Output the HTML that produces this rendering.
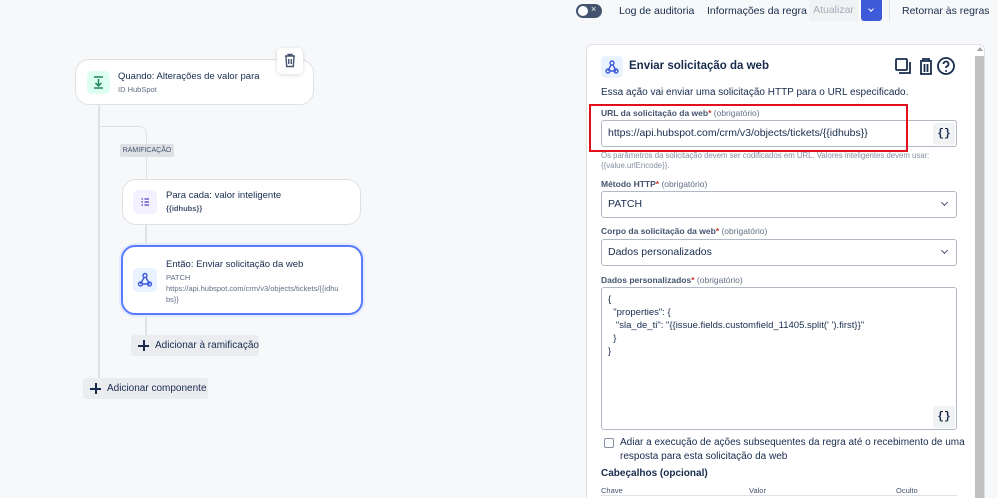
<!DOCTYPE html>
<html><head><meta charset="utf-8"><style>
*{box-sizing:border-box;margin:0;padding:0}
html,body{width:998px;height:498px;overflow:hidden}
body{background:#f7f8f9;font-family:"Liberation Sans",sans-serif;color:#172b4d;position:relative}
.a{position:absolute}
.t{font-size:11px;white-space:nowrap}
.card{position:absolute;background:#fff;border:1px solid #dfe1e6;border-radius:14px}
.lbl{position:absolute;left:601px;font-size:8.5px;font-weight:bold;color:#44546f;white-space:nowrap}
.lbl span{font-weight:normal;color:#626f86}
.lbl i{color:#c9372c;font-style:normal}
.inp{position:absolute;left:601px;width:356px;border:1px solid #b3b9c4;border-radius:3px;background:#fff;font-size:10.5px;padding-left:6px;white-space:nowrap}
.br{position:absolute;width:22px;height:22px;background:#f1f2f4;border-radius:3px;font-size:11px;font-weight:bold;text-align:center;line-height:22px;font-family:"Liberation Mono",monospace}
.chev{position:absolute;right:9px;top:8px;width:5px;height:5px;border-right:1.5px solid #44546f;border-bottom:1.5px solid #44546f;transform:rotate(45deg)}
.btn{position:absolute;background:#ebecf0;border-radius:3px;font-size:10px;color:#172b4d;padding-left:24px;line-height:21px;height:21px;white-space:nowrap}
.btn:before{content:"";position:absolute;left:7px;top:10px;width:11px;height:1.5px;background:#172b4d}
.btn:after{content:"";position:absolute;left:12px;top:5px;width:1.5px;height:11px;background:#172b4d}
</style></head><body>
<div class="a" style="left:576px;top:4px;width:26px;height:14px;background:#44546f;border-radius:7px"><div class="a" style="left:2px;top:2px;width:10px;height:10px;background:#fff;border-radius:50%"></div><div class="a t" style="left:15px;top:0;color:#fff;font-size:9px">×</div></div>
<div class="a t" style="left:619px;top:5px;font-size:10.5px">Log de auditoria</div>
<div class="a t" style="left:707px;top:5px;font-size:10.5px">Informações da regra</div>
<div class="a t" style="left:809px;top:0;width:49px;height:21px;background:#f1f2f4;color:#a5adba;line-height:21px;text-align:center;font-size:10.5px">Atualizar</div>
<div class="a" style="left:861px;top:0;width:21px;height:21px;background:#3d5ad9;border-radius:0 0 3px 3px"><div class="a" style="left:8px;top:7px;width:4px;height:4px;border-right:1.5px solid #fff;border-bottom:1.5px solid #fff;transform:rotate(45deg)"></div></div>
<div class="a" style="left:889px;top:0;width:1px;height:21px;background:#dfe1e6"></div>
<div class="a t" style="left:902px;top:5px;font-size:10.5px">Retornar às regras</div>

<div class="a" style="left:98px;top:104px;width:2px;height:275px;background:#dfe1e6"></div>
<div class="a" style="left:99px;top:126px;width:48px;height:56px;border-top:1.5px solid #dfe1e6;border-right:1.5px solid #dfe1e6;border-radius:0 8px 0 0"></div>
<div class="a" style="left:145px;top:222px;width:1.5px;height:115px;background:#dfe1e6"></div>
<div class="a" style="left:120px;top:144px;width:54px;height:13px;background:#dfe1e6;border-radius:2px;font-size:7px;color:#44546f;line-height:13px;text-align:center;white-space:nowrap">RAMIFICAÇÃO</div>

<div class="card" style="left:75px;top:59px;width:239px;height:46px">
<div class="a" style="left:11px;top:11px;width:23px;height:23px;background:#dcfff1;border-radius:5px"><svg width="23" height="23"><path d="M7 6h9M11.5 8v7M8.5 12l3 3 3-3M7 17h9" stroke="#1f845a" stroke-width="1.5" fill="none"/></svg></div>
<div class="a t" style="left:42px;top:11px;font-size:9.5px">Quando: Alterações de valor para</div>
<div class="a t" style="left:42px;top:25px;font-size:7.5px;color:#626f86">ID HubSpot</div>
</div>
<div class="a" style="left:277px;top:48px;width:26px;height:26px;background:#fff;border-radius:5px;box-shadow:0 1px 4px rgba(0,0,0,.15)"><svg width="26" height="26"><path d="M8 8h10M11 8V6.5h4V8M9 8.5l.7 10h6.6l.7-10M11.7 11v5M14.3 11v5" stroke="#44546f" stroke-width="1.4" fill="none"/></svg></div>

<div class="card" style="left:122px;top:179px;width:239px;height:46px">
<div class="a" style="left:10px;top:10px;width:24px;height:24px;background:#f3f0ff;border-radius:5px"><svg width="24" height="24"><path d="M8.5 9h1.5M11.5 9h4.5M8.5 12h1.5M11.5 12h4.5M8.5 15h1.5M11.5 15h4.5" stroke="#6e5dc6" stroke-width="1.6"/></svg></div>
<div class="a t" style="left:43px;top:10px;font-size:9.5px">Para cada: valor inteligente</div>
<div class="a t" style="left:43px;top:24px;font-size:7.5px;font-weight:bold;color:#44546f">{{idhubs}}</div>
</div>

<div class="card" style="left:121px;top:245px;width:242px;height:70px;border:2px solid #5b7bfe;box-shadow:0 0 0 2px #e4ebff">
<div class="a" style="left:10px;top:21px;width:24px;height:24px;background:#e9f2ff;border-radius:5px"><svg width="24" height="24"><g stroke="#3d5ad9" stroke-width="1.4" fill="none"><circle cx="12" cy="7.5" r="2"/><circle cx="7.5" cy="16" r="2"/><circle cx="16.5" cy="16" r="2"/><path d="M11 9.5l-3.5 6.5M13 9.5l3.5 6.5M9.5 16h7"/></g></svg></div>
<div class="a t" style="left:43px;top:12px;font-size:9.5px">Então: Enviar solicitação da web</div>
<div class="a t" style="left:43px;top:26px;font-size:7.5px;color:#626f86">PATCH</div>
<div class="a t" style="left:43px;top:37px;font-size:7.5px;color:#626f86">https://api.hubspot.com/crm/v3/objects/tickets/{{idhu</div>
<div class="a t" style="left:43px;top:48px;font-size:7.5px;color:#626f86">bs}}</div>
</div>

<div class="btn" style="left:131px;top:335px;width:128px">Adicionar à ramificação</div>
<div class="btn" style="left:83px;top:378px;width:125px">Adicionar componente</div>

<div class="a" style="left:586px;top:44px;width:399px;height:470px;background:#fff;border:1px solid #dfe1e6;border-radius:6px"></div>
<div class="a" style="left:975px;top:56px;width:9px;height:442px;background:#c1c1c1"></div>
<div class="a" style="left:977px;top:47px;width:0;height:0;border-left:3px solid transparent;border-right:3px solid transparent;border-bottom:4px solid #a0a0a0"></div>

<div class="a" style="left:601px;top:56px;width:22px;height:22px;background:#e9f2ff;border-radius:5px"><svg width="22" height="22"><g stroke="#3d5ad9" stroke-width="1.4" fill="none"><circle cx="11" cy="7" r="2"/><circle cx="7" cy="15" r="2"/><circle cx="15" cy="15" r="2"/><path d="M10 9l-3 6M12 9l3 6M9 15h6"/></g></svg></div>
<div class="a t" style="left:629px;top:60px;font-size:11.5px;font-weight:bold">Enviar solicitação da web</div>
<svg class="a" style="left:894px;top:56px" width="64" height="20"><g stroke="#172b4d" stroke-width="1.8" fill="none"><rect x="2" y="3" width="11" height="11" rx="1"/><path d="M5 17h11V6"/><path d="M26 5h12M29 5V3h6v2M27 6v12h10V6M30.5 8v8M33.5 8v8"/><circle cx="52" cy="10" r="8"/><path d="M49.5 8a2.5 2.5 0 1 1 3.5 2.3c-.8.4-1 1-1 1.7"/></g><circle cx="52" cy="15" r="1" fill="#172b4d"/></svg>
<div class="a t" style="left:601px;top:87px;font-size:10px">Essa ação vai enviar uma solicitação HTTP para o URL especificado.</div>

<div class="lbl" style="top:108px">URL da solicitação da web<i>*</i> <span>(obrigatório)</span></div>
<div class="inp" style="top:120px;height:27px;line-height:25px">https://api.hubspot.com/crm/v3/objects/tickets/{{idhubs}}</div>
<div class="br" style="left:933px;top:123px">{}</div>
<div class="a" style="left:589px;top:104px;width:319px;height:48px;border:2px solid #e0101c"></div>
<div class="a t" style="left:601px;top:151px;font-size:7.8px;color:#8590a2">Os parâmetros da solicitação devem ser codificados em URL. Valores inteligentes devem usar:</div>
<div class="a t" style="left:601px;top:161px;font-size:7.8px;color:#8590a2">{{value.urlEncode}}.</div>

<div class="lbl" style="top:179px">Método HTTP<i>*</i> <span>(obrigatório)</span></div>
<div class="inp" style="top:191px;height:27px;line-height:25px">PATCH<div class="chev"></div></div>
<div class="lbl" style="top:226px">Corpo da solicitação da web<i>*</i> <span>(obrigatório)</span></div>
<div class="inp" style="top:239px;height:27px;line-height:25px">Dados personalizados<div class="chev"></div></div>
<div class="lbl" style="top:275px">Dados personalizados<i>*</i> <span>(obrigatório)</span></div>
<div class="inp" style="top:287px;height:143px;font-size:9.5px;line-height:13px;padding-top:5px;white-space:pre">{
  "properties": {
   "sla_de_ti": "{{issue.fields.customfield_11405.split(' ').first}}"
  }
}</div>
<div class="br" style="left:933px;top:406px">{}</div>

<div class="a" style="left:604px;top:438px;width:10px;height:10px;border:1.5px solid #8590a2;border-radius:2px"></div>
<div class="a t" style="left:620px;top:437px;font-size:10px">Adiar a execução de ações subsequentes da regra até o recebimento de uma</div>
<div class="a t" style="left:620px;top:451px;font-size:10px">resposta para esta solicitação da web</div>
<div class="a t" style="left:601px;top:468px;font-size:10px;font-weight:bold">Cabeçalhos (opcional)</div>
<div class="a t" style="left:601px;top:486px;font-size:7.5px;color:#44546f">Chave</div>
<div class="a t" style="left:749px;top:486px;font-size:7.5px;color:#44546f">Valor</div>
<div class="a t" style="left:896px;top:486px;font-size:7.5px;color:#44546f">Oculto</div>
<div class="a" style="left:601px;top:495px;width:356px;height:1px;background:#dfe1e6"></div>
</body></html>
